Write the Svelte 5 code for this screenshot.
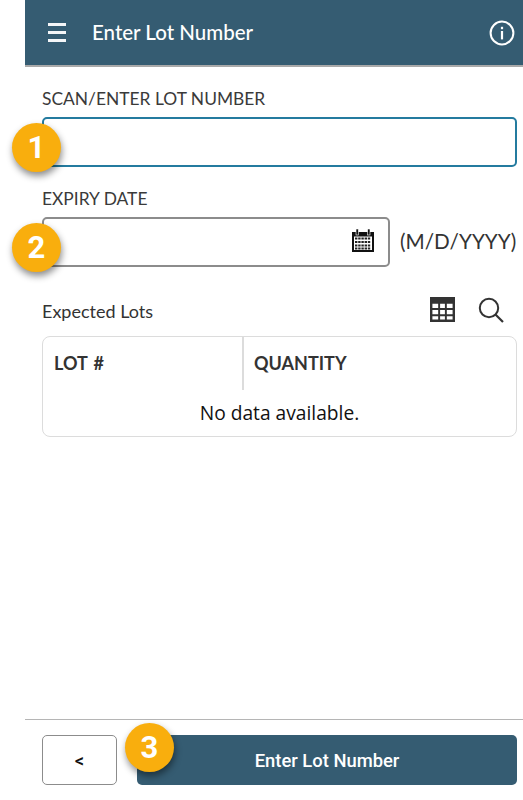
<script>
	const columns = ['LOT #', 'QUANTITY'];
</script>

<div class="page">
	<header class="topbar">
		<div class="menu" aria-label="Menu">
			<span></span>
			<span></span>
			<span></span>
		</div>
		<h1>Enter Lot Number</h1>
		<svg class="info" viewBox="0 0 26 26" width="26" height="26" aria-label="Info">
			<circle cx="13" cy="13" r="11.4" fill="none" stroke="#fff" stroke-width="2" />
			<rect x="11.9" y="11" width="2.2" height="8.4" fill="#fff" />
			<rect x="11.9" y="6.8" width="2.2" height="2.4" fill="#fff" />
		</svg>
	</header>

	<main class="content">
		<div class="field first">
			<label for="lot">SCAN/ENTER LOT NUMBER</label>
			<input id="lot" class="focused" type="text" />
			<span class="badge badge-field">1</span>
		</div>

		<div class="field second">
			<label for="expiry">EXPIRY DATE</label>
			<div class="date-row">
				<div class="date-input">
					<input id="expiry" type="text" />
					<svg class="calendar" viewBox="0 0 24 24" width="24" height="24">
						<path d="M1 4h22v20H1z" fill="#111" />
						<rect x="5" y="1" width="2.4" height="6" fill="#111" stroke="#fff" stroke-width="0.6" />
						<rect x="16.6" y="1" width="2.4" height="6" fill="#111" stroke="#fff" stroke-width="0.6" />
						<rect x="3" y="8.5" width="18" height="13.5" fill="#fff" />
						{#each [9.5, 13, 16.5, 19.5] as y}
							{#each [4, 7.2, 10.4, 13.6, 16.8] as x}
								<rect {x} {y} width="2.4" height="2" fill="#222" />
							{/each}
						{/each}
					</svg>
				</div>
				<span class="hint">(M/D/YYYY)</span>
			</div>
			<span class="badge badge-field">2</span>
		</div>

		<section class="lots">
			<div class="lots-head">
				<h2>Expected Lots</h2>
				<div class="tools">
					<svg viewBox="0 0 26 26" width="26" height="26" aria-label="Columns">
						<path
							d="M0 0h26v26H0z M2.5 7v4.5h6v-4.5z M10.5 7v4.5h5v-4.5z M17.5 7v4.5h6v-4.5z M2.5 13.5v4.5h6v-4.5z M10.5 13.5v4.5h5v-4.5z M17.5 13.5v4.5h6v-4.5z M2.5 20v3.5h6v-3.5z M10.5 20v3.5h5v-3.5z M17.5 20v3.5h6v-3.5z"
							fill="#333"
							fill-rule="evenodd"
						/>
					</svg>
					<svg viewBox="0 0 26 26" width="26" height="26" aria-label="Search">
						<circle cx="11" cy="11" r="9.2" fill="none" stroke="#333" stroke-width="2" />
						<path d="M17.5 17.5L25 25" stroke="#333" stroke-width="2.2" fill="none" />
					</svg>
				</div>
			</div>

			<div class="table">
				<div class="thead">
					{#each columns as col}
						<div class="th">{col}</div>
					{/each}
				</div>
				<div class="empty">No data available.</div>
			</div>
		</section>
	</main>

	<footer class="footer">
		<button class="back">&lt;</button>
		<button class="primary">Enter Lot Number</button>
		<span class="badge badge-footer">3</span>
	</footer>
</div>

<style>
	:global(body) {
		margin: 0;
		background: #fff;
	}
	.page {
		height: 800px;
		margin-left: 25px;
		display: flex;
		flex-direction: column;
		font-family: Lato, 'Open Sans', sans-serif;
		color: #333;
	}
	.topbar {
		height: 65px;
		flex: none;
		display: flex;
		align-items: center;
		background: #355c72;
		border-bottom: 2px solid #a9a9a9;
		color: #fff;
	}
	.menu {
		width: 18px;
		margin-left: 23px;
		display: flex;
		flex-direction: column;
		gap: 5px;
	}
	.menu span {
		height: 3px;
		background: #f4f6f8;
	}
	h1 {
		margin: 0 0 0 26px;
		flex: 1;
		font-size: 20.5px;
		font-weight: 500;
		line-height: 24px;
		position: relative;
		top: -1px;
	}
	.info {
		margin-right: 8px;
	}
	.content {
		flex: 1;
		padding: 0 6px 0 17px;
	}
	.field {
		position: relative;
	}
	.first {
		margin-top: 21px;
	}
	.second {
		margin-top: 21px;
	}
	label {
		display: block;
		height: 29px;
		font-size: 17.4px;
		line-height: 22px;
		color: #3a3a3a;
	}
	input {
		box-sizing: border-box;
		display: block;
		width: 100%;
		height: 50px;
		padding: 0 10px;
		border: 2px solid #8c8c8c;
		border-radius: 5px;
		background: #fff;
		outline: none;
	}
	input.focused {
		border-color: #247b9f;
	}
	.date-row {
		display: flex;
		align-items: center;
	}
	.date-input {
		position: relative;
		width: 348px;
	}
	.calendar {
		position: absolute;
		right: 15px;
		top: 11px;
	}
	.hint {
		margin-left: 10px;
		font-size: 20.7px;
		color: #333;
		white-space: nowrap;
		position: relative;
		top: -1px;
	}
	.lots {
		margin-top: 28px;
	}
	.lots-head {
		height: 41px;
		display: flex;
		align-items: flex-start;
		justify-content: space-between;
	}
	h2 {
		margin: 5px 0 0;
		font-size: 18px;
		font-weight: 400;
		line-height: 22px;
	}
	.tools {
		display: flex;
		gap: 24px;
		padding: 2px 13px 0 0;
	}
	.tools svg:first-child {
		margin-left: 1px;
		margin-right: -1px;
		width: 25px;
		height: 25px;
	}
	.table {
		box-sizing: border-box;
		height: 101px;
		border: 1px solid #dcdcdc;
		border-radius: 8px;
	}
	.thead {
		display: grid;
		grid-template-columns: 201px 1fr;
		height: 53px;
	}
	.th {
		padding-left: 10px;
		font-size: 18px;
		font-weight: 700;
		line-height: 53px;
		color: #333;
	}
	.th:first-child {
		padding-left: 11px;
		word-spacing: 2px;
		border-right: 2px solid #dcdcdc;
	}
	.empty {
		text-align: center;
		font-family: 'Open Sans', sans-serif;
		font-size: 19.2px;
		line-height: 46px;
		color: #111;
	}
	.footer {
		position: relative;
		flex: none;
		height: 80px;
		margin-bottom: 1px;
		box-sizing: border-box;
		padding: 15px 6px 15px 17px;
		border-top: 1px solid #b5b5b5;
		display: flex;
		gap: 20px;
	}
	button {
		height: 50px;
		border-radius: 5px;
		font-family: Roboto, sans-serif;
		font-size: 18.4px;
		font-weight: 500;
	}
	.back {
		width: 75px;
		border: 1px solid #8c8c8c;
		background: #fff;
		color: #111;
	}
	.primary {
		flex: 1;
		border: none;
		background: #355c72;
		color: #fff;
		padding: 0;
	}
	.badge {
		position: absolute;
		box-sizing: border-box;
		width: 49px;
		height: 49px;
		border-radius: 50%;
		background: #f9ae0d;
		box-shadow: 1px 4px 7px rgba(0, 0, 0, 0.45);
		color: #fff;
		font-family: Roboto, sans-serif;
		font-size: 31px;
		font-weight: 700;
		line-height: 49px;
		text-align: center;
	}
	.badge-field {
		left: -30px;
		bottom: -5px;
	}
	.badge-footer {
		left: 100px;
		top: 3px;
	}
</style>
